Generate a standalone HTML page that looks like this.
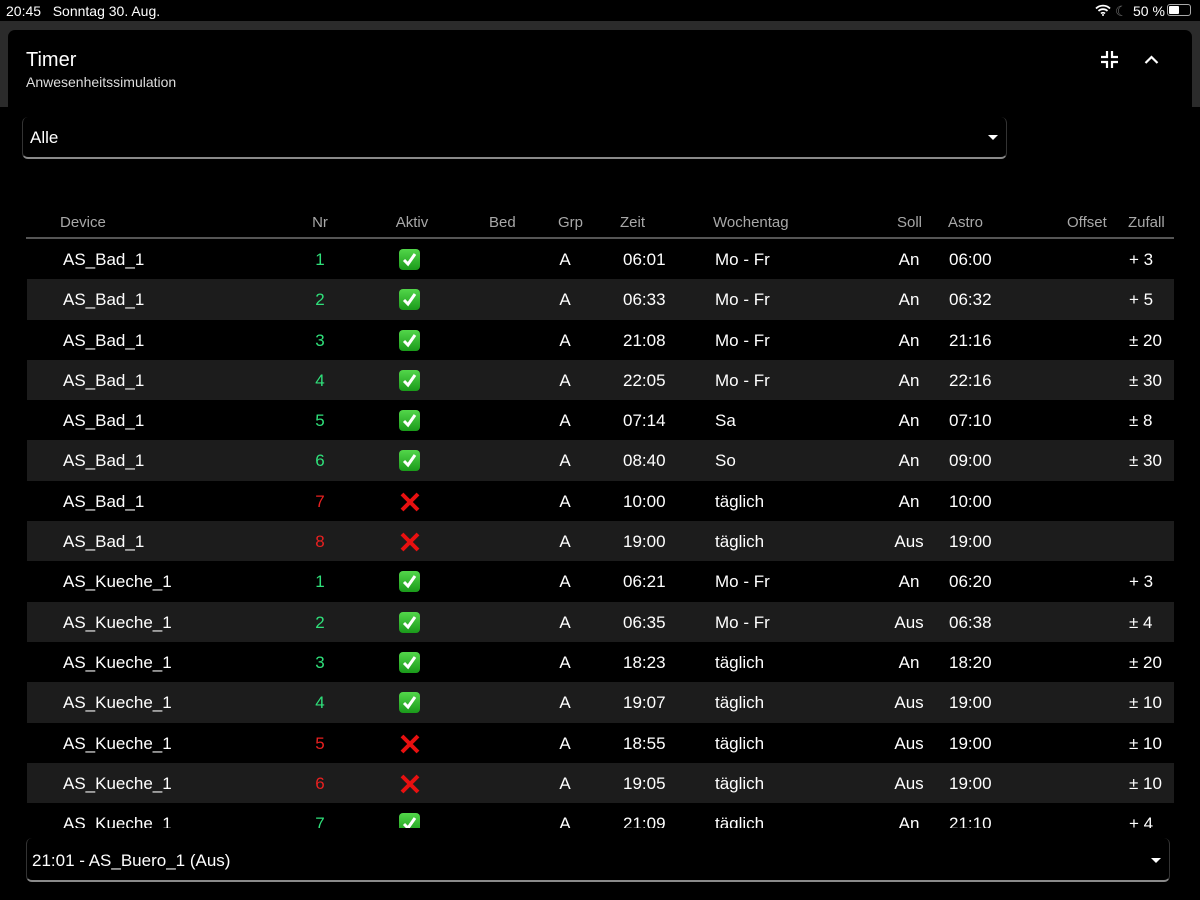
<!DOCTYPE html>
<html><head><meta charset="utf-8"><style>
*{margin:0;padding:0;box-sizing:border-box}
body{width:1200px;height:900px;background:#000;color:#fff;font-family:"Liberation Sans",sans-serif;position:relative;overflow:hidden}
.a{position:absolute;white-space:nowrap}
.band{position:absolute;left:0;top:21px;width:1200px;height:86px;background:#2b2b2b}
.card{position:absolute;left:8px;top:30px;width:1184px;height:200px;background:#000;border-radius:7px}
.hdr{position:absolute;top:214px;font-size:15px;color:#a8a8a8}
.line{position:absolute;left:26px;top:237px;width:1148px;height:2px;background:#555}
.rows{position:absolute;left:27px;top:239px;width:1147px;height:589px;overflow:hidden}
.r{position:relative;height:40.3px;font-size:17px}
.r:nth-child(even){background:#1c1c1c}
.r span{position:absolute;top:11px}
.g{color:#2fe07a}.rd{color:#e82020}
.c{transform:translateX(-50%)}
.ck{position:absolute;left:372px;top:10px;width:21px;height:21px;border-radius:4px;background:linear-gradient(#52d64a,#1a9a1a)}
.x{position:absolute;left:372px;top:10px;width:22px;height:22px}
.sel{position:absolute;border-radius:6px;border-bottom:2px solid #8a8a8a}
.tri{position:absolute;width:0;height:0;border-left:5px solid transparent;border-right:5px solid transparent;border-top:5px solid #fff}
</style></head><body>
<div class="a" style="left:6px;top:3px;font-size:14px">20:45&nbsp;&nbsp; Sonntag 30. Aug.</div>
<svg class="a" style="left:1095px;top:4px" width="16" height="12" viewBox="0 0 16 12"><path d="M1 4.5a10 10 0 0 1 14 0M3.5 7a6.5 6.5 0 0 1 9 0M6 9.5a3 3 0 0 1 4 0" stroke="#fff" stroke-width="1.8" fill="none"/><circle cx="8" cy="11" r="1" fill="#fff"/></svg>
<div class="a" style="left:1115px;top:3px;font-size:14px;color:#777">☾</div>
<div class="a" style="left:1133px;top:3px;font-size:14px">50 %</div>
<div class="a" style="left:1167px;top:4px;width:24px;height:12px;border:1px solid #aaa;border-radius:3px"><div style="position:absolute;left:1px;top:1px;width:10px;height:8px;background:#fff;border-radius:1px"></div></div>
<div class="band"></div>
<div class="card"></div>
<div class="a" style="left:26px;top:49px;font-size:20px">Timer</div>
<div class="a" style="left:26px;top:74px;font-size:14px;color:#ddd">Anwesenheitssimulation</div>
<svg class="a" style="left:1101px;top:51px" width="17" height="17" viewBox="0 0 17 17"><path d="M6 0v6H0M11 0v6h6M6 17v-6H0M11 17v-6h6" stroke="#fff" stroke-width="2.2" fill="none"/></svg>
<svg class="a" style="left:1144px;top:55px" width="15" height="10" viewBox="0 0 15 10"><path d="M1.5 8l6-6 6 6" stroke="#fff" stroke-width="2.2" fill="none"/></svg>
<div class="sel" style="left:22px;top:117px;width:985px;height:42px;border-left:1px solid #333;border-right:1px solid #333"></div>
<div class="a" style="left:30px;top:128px;font-size:17px">Alle</div>
<div class="tri" style="left:988px;top:135px"></div>
<span class="a hdr" style="left:60px">Device</span>
<span class="a hdr c" style="left:320px">Nr</span>
<span class="a hdr c" style="left:412px">Aktiv</span>
<span class="a hdr" style="left:489px">Bed</span>
<span class="a hdr" style="left:558px">Grp</span>
<span class="a hdr" style="left:620px">Zeit</span>
<span class="a hdr" style="left:713px">Wochentag</span>
<span class="a hdr" style="left:897px">Soll</span>
<span class="a hdr" style="left:948px">Astro</span>
<span class="a hdr" style="left:1067px">Offset</span>
<span class="a hdr" style="left:1128px">Zufall</span>
<div class="line"></div>
<div class="rows">
<div class="r"><span style="left:36px">AS_Bad_1</span><span class="g c" style="left:293px">1</span><div class="ck"><svg width="21" height="21"><path d="M5 11l4 4 7-10" stroke="#fff" stroke-width="3" fill="none"/></svg></div><span class="c" style="left:538px">A</span><span style="left:596px">06:01</span><span style="left:688px">Mo - Fr</span><span class="c" style="left:882px">An</span><span style="left:922px">06:00</span><span style="left:1102px">+ 3</span></div>
<div class="r"><span style="left:36px">AS_Bad_1</span><span class="g c" style="left:293px">2</span><div class="ck"><svg width="21" height="21"><path d="M5 11l4 4 7-10" stroke="#fff" stroke-width="3" fill="none"/></svg></div><span class="c" style="left:538px">A</span><span style="left:596px">06:33</span><span style="left:688px">Mo - Fr</span><span class="c" style="left:882px">An</span><span style="left:922px">06:32</span><span style="left:1102px">+ 5</span></div>
<div class="r"><span style="left:36px">AS_Bad_1</span><span class="g c" style="left:293px">3</span><div class="ck"><svg width="21" height="21"><path d="M5 11l4 4 7-10" stroke="#fff" stroke-width="3" fill="none"/></svg></div><span class="c" style="left:538px">A</span><span style="left:596px">21:08</span><span style="left:688px">Mo - Fr</span><span class="c" style="left:882px">An</span><span style="left:922px">21:16</span><span style="left:1102px">± 20</span></div>
<div class="r"><span style="left:36px">AS_Bad_1</span><span class="g c" style="left:293px">4</span><div class="ck"><svg width="21" height="21"><path d="M5 11l4 4 7-10" stroke="#fff" stroke-width="3" fill="none"/></svg></div><span class="c" style="left:538px">A</span><span style="left:596px">22:05</span><span style="left:688px">Mo - Fr</span><span class="c" style="left:882px">An</span><span style="left:922px">22:16</span><span style="left:1102px">± 30</span></div>
<div class="r"><span style="left:36px">AS_Bad_1</span><span class="g c" style="left:293px">5</span><div class="ck"><svg width="21" height="21"><path d="M5 11l4 4 7-10" stroke="#fff" stroke-width="3" fill="none"/></svg></div><span class="c" style="left:538px">A</span><span style="left:596px">07:14</span><span style="left:688px">Sa</span><span class="c" style="left:882px">An</span><span style="left:922px">07:10</span><span style="left:1102px">± 8</span></div>
<div class="r"><span style="left:36px">AS_Bad_1</span><span class="g c" style="left:293px">6</span><div class="ck"><svg width="21" height="21"><path d="M5 11l4 4 7-10" stroke="#fff" stroke-width="3" fill="none"/></svg></div><span class="c" style="left:538px">A</span><span style="left:596px">08:40</span><span style="left:688px">So</span><span class="c" style="left:882px">An</span><span style="left:922px">09:00</span><span style="left:1102px">± 30</span></div>
<div class="r"><span style="left:36px">AS_Bad_1</span><span class="rd c" style="left:293px">7</span><svg class="x"><path d="M3 3l16 16M19 3L3 19" stroke="#e81010" stroke-width="4"/></svg><span class="c" style="left:538px">A</span><span style="left:596px">10:00</span><span style="left:688px">täglich</span><span class="c" style="left:882px">An</span><span style="left:922px">10:00</span></div>
<div class="r"><span style="left:36px">AS_Bad_1</span><span class="rd c" style="left:293px">8</span><svg class="x"><path d="M3 3l16 16M19 3L3 19" stroke="#e81010" stroke-width="4"/></svg><span class="c" style="left:538px">A</span><span style="left:596px">19:00</span><span style="left:688px">täglich</span><span class="c" style="left:882px">Aus</span><span style="left:922px">19:00</span></div>
<div class="r"><span style="left:36px">AS_Kueche_1</span><span class="g c" style="left:293px">1</span><div class="ck"><svg width="21" height="21"><path d="M5 11l4 4 7-10" stroke="#fff" stroke-width="3" fill="none"/></svg></div><span class="c" style="left:538px">A</span><span style="left:596px">06:21</span><span style="left:688px">Mo - Fr</span><span class="c" style="left:882px">An</span><span style="left:922px">06:20</span><span style="left:1102px">+ 3</span></div>
<div class="r"><span style="left:36px">AS_Kueche_1</span><span class="g c" style="left:293px">2</span><div class="ck"><svg width="21" height="21"><path d="M5 11l4 4 7-10" stroke="#fff" stroke-width="3" fill="none"/></svg></div><span class="c" style="left:538px">A</span><span style="left:596px">06:35</span><span style="left:688px">Mo - Fr</span><span class="c" style="left:882px">Aus</span><span style="left:922px">06:38</span><span style="left:1102px">± 4</span></div>
<div class="r"><span style="left:36px">AS_Kueche_1</span><span class="g c" style="left:293px">3</span><div class="ck"><svg width="21" height="21"><path d="M5 11l4 4 7-10" stroke="#fff" stroke-width="3" fill="none"/></svg></div><span class="c" style="left:538px">A</span><span style="left:596px">18:23</span><span style="left:688px">täglich</span><span class="c" style="left:882px">An</span><span style="left:922px">18:20</span><span style="left:1102px">± 20</span></div>
<div class="r"><span style="left:36px">AS_Kueche_1</span><span class="g c" style="left:293px">4</span><div class="ck"><svg width="21" height="21"><path d="M5 11l4 4 7-10" stroke="#fff" stroke-width="3" fill="none"/></svg></div><span class="c" style="left:538px">A</span><span style="left:596px">19:07</span><span style="left:688px">täglich</span><span class="c" style="left:882px">Aus</span><span style="left:922px">19:00</span><span style="left:1102px">± 10</span></div>
<div class="r"><span style="left:36px">AS_Kueche_1</span><span class="rd c" style="left:293px">5</span><svg class="x"><path d="M3 3l16 16M19 3L3 19" stroke="#e81010" stroke-width="4"/></svg><span class="c" style="left:538px">A</span><span style="left:596px">18:55</span><span style="left:688px">täglich</span><span class="c" style="left:882px">Aus</span><span style="left:922px">19:00</span><span style="left:1102px">± 10</span></div>
<div class="r"><span style="left:36px">AS_Kueche_1</span><span class="rd c" style="left:293px">6</span><svg class="x"><path d="M3 3l16 16M19 3L3 19" stroke="#e81010" stroke-width="4"/></svg><span class="c" style="left:538px">A</span><span style="left:596px">19:05</span><span style="left:688px">täglich</span><span class="c" style="left:882px">Aus</span><span style="left:922px">19:00</span><span style="left:1102px">± 10</span></div>
<div class="r"><span style="left:36px">AS_Kueche_1</span><span class="g c" style="left:293px">7</span><div class="ck"><svg width="21" height="21"><path d="M5 11l4 4 7-10" stroke="#fff" stroke-width="3" fill="none"/></svg></div><span class="c" style="left:538px">A</span><span style="left:596px">21:09</span><span style="left:688px">täglich</span><span class="c" style="left:882px">An</span><span style="left:922px">21:10</span><span style="left:1102px">+ 4</span></div>
</div>
<div class="sel" style="left:26px;top:838px;width:1144px;height:44px;border-left:1px solid #333;border-right:1px solid #333"></div>
<div class="a" style="left:32px;top:851px;font-size:17px">21:01 - AS_Buero_1 (Aus)</div>
<div class="tri" style="left:1151px;top:858px"></div>
</body></html>
